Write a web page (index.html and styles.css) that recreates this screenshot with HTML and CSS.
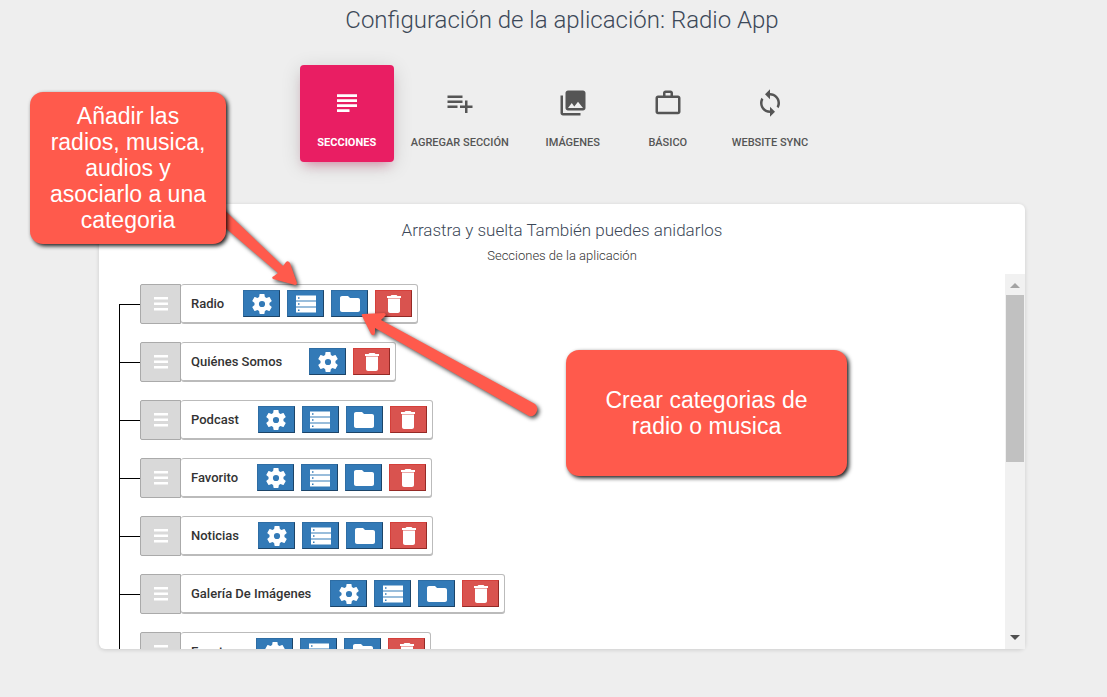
FILE: index.html
```html
<!DOCTYPE html>
<html lang="es">
<head>
<meta charset="utf-8">
<title>Configuración de la aplicación: Radio App</title>
<link rel="stylesheet" href="styles.css">
</head>
<body>
<svg class="sprite" aria-hidden="true">
  <symbol id="i-subject" viewBox="0 0 24 24"><path d="M14 17H4v2.200h10V17zm6-8H4v2.200h16V9zM4 15.200h16V13H4v2.200zM4 5v2.200h16V5H4z"/></symbol>
  <symbol id="i-add" viewBox="0 0 24 24"><path d="M14 10H2v2h12v-2zm0-4H2v2h12V6zm4 8v-4h-2v4h-4v2h4v4h2v-4h4v-2h-4zM2 16h8v-2H2v2z"/></symbol>
  <symbol id="i-photos" viewBox="0 0 24 24"><path d="M22 16V4c0-1.1-.9-2-2-2H8c-1.1 0-2 .9-2 2v12c0 1.1.9 2 2 2h12c1.1 0 2-.9 2-2zm-11-4l2.03 2.71L16 11l4 5H8l3-4zM2 6v14c0 1.1.9 2 2 2h14v-2H4V6H2z"/></symbol>
  <symbol id="i-work" viewBox="0 0 24 24"><path d="M14 6V4h-4v2h4zM4 8v11h16V8H4zm16-2c1.11 0 2 .89 2 2v11c0 1.11-.89 2-2 2H4c-1.11 0-2-.89-2-2l.01-11c0-1.11.88-2 1.99-2h4V4c0-1.11.89-2 2-2h4c1.11 0 2 .89 2 2v2h4z"/></symbol>
  <symbol id="i-sync" viewBox="0 0 24 24"><path d="M12 4V1L8 5l4 4V6c3.31 0 6 2.69 6 6 0 1.01-.25 1.97-.7 2.8l1.46 1.46C19.54 15.03 20 13.57 20 12c0-4.42-3.58-8-8-8zm0 14c-3.31 0-6-2.69-6-6 0-1.01.25-1.97.7-2.8L5.24 7.74C4.46 8.97 4 10.43 4 12c0 4.42 3.58 8 8 8v3l4-4-4-4v3z"/></symbol>
  <symbol id="i-gear" viewBox="0 0 24 24"><path d="M19.43 12.98c.04-.32.07-.64.07-.98s-.03-.66-.07-.98l2.11-1.65c.19-.15.24-.42.12-.64l-2-3.46c-.12-.22-.39-.3-.61-.22l-2.49 1c-.52-.4-1.08-.73-1.69-.98l-.38-2.65C14.46 2.18 14.25 2 14 2h-4c-.25 0-.46.18-.49.42l-.38 2.65c-.61.25-1.17.59-1.69.98l-2.49-1c-.23-.09-.49 0-.61.22l-2 3.46c-.13.22-.07.49.12.64l2.11 1.65c-.04.32-.07.65-.07.98s.03.66.07.98l-2.11 1.65c-.19.15-.24.42-.12.64l2 3.46c.12.22.39.3.61.22l2.49-1c.52.4 1.08.73 1.69.98l.38 2.65c.03.24.24.42.49.42h4c.25 0 .46-.18.49-.42l.38-2.65c.61-.25 1.17-.59 1.69-.98l2.49 1c.23.09.49 0 .61-.22l2-3.46c.12-.22.07-.49-.12-.64l-2.11-1.65zM12 15.1a3.1 3.1 0 1 1 0-6.2 3.1 3.1 0 0 1 0 6.200z"/></symbol>
  <symbol id="i-storage" viewBox="0 0 24 24"><path d="M2 20.500h20v-5H2v5zm2-3h1.500v1.500H4v-1.500zM2 3.500v5h20v-5H2zm3.500 3.200H4V5.200h1.500v1.500zM2 14.500h20v-5H2v5zm2-3.200h1.500v1.500H4v-1.500z"/></symbol>
  <symbol id="i-folder" viewBox="0 0 24 24"><path d="M10 4H4c-1.100 0-1.990.900-1.990 2L2 18c0 1.100.900 2 2 2h16c1.100 0 2-.900 2-2V8c0-1.100-.900-2-2-2h-8l-2-2z"/></symbol>
  <symbol id="i-trash" viewBox="0 0 24 24"><path d="M6 19c0 1.100.900 2 2 2h8c1.100 0 2-.900 2-2V6.600H6V19zM19 4h-3.500l-1-1h-5l-1 1H5v2h14V4z"/></symbol>
  <symbol id="i-grip" viewBox="0 0 16 16"><path d="M1 1h14v2.500H1zM1 6.500h14V9H1zM1 12h14v2.500H1z"/></symbol>
</svg>

<main class="page">
  <h1 class="title">Configuración de la aplicación: Radio App</h1>

  <nav class="tabs">
    <a class="tab tab-active" href="#secciones"><svg class="tab-icon"><use href="#i-subject"/></svg>Secciones</a>
    <a class="tab" href="#agregar"><svg class="tab-icon"><use href="#i-add"/></svg>Agregar sección</a>
    <a class="tab" href="#imagenes"><svg class="tab-icon"><use href="#i-photos"/></svg>Imágenes</a>
    <a class="tab" href="#basico"><svg class="tab-icon"><use href="#i-work"/></svg>Básico</a>
    <a class="tab" href="#sync"><svg class="tab-icon"><use href="#i-sync"/></svg>Website sync</a>
  </nav>

  <section class="panel" id="secciones">
    <header class="panel-head">
      <h2 class="panel-title">Arrastra y suelta También puedes anidarlos</h2>
      <p class="panel-sub">Secciones de la aplicación</p>
    </header>
    <div class="panel-body">
      <ul class="tree">
        <li class="node">
          <button class="grip" aria-label="Mover"><svg class="grip-icon"><use href="#i-grip"/></svg></button>
          <div class="card"><span class="name">Radio</span>
            <button class="act" aria-label="Configurar"><svg class="icon"><use href="#i-gear"/></svg></button>
            <button class="act" aria-label="Contenido"><svg class="icon"><use href="#i-storage"/></svg></button>
            <button class="act" aria-label="Categorías"><svg class="icon"><use href="#i-folder"/></svg></button>
            <button class="act act-del" aria-label="Eliminar"><svg class="icon"><use href="#i-trash"/></svg></button></div>
        </li>
        <li class="node">
          <button class="grip" aria-label="Mover"><svg class="grip-icon"><use href="#i-grip"/></svg></button>
          <div class="card card-short"><span class="name">Quiénes Somos</span>
            <button class="act" aria-label="Configurar"><svg class="icon"><use href="#i-gear"/></svg></button>
            <button class="act act-del" aria-label="Eliminar"><svg class="icon"><use href="#i-trash"/></svg></button></div>
        </li>
        <li class="node">
          <button class="grip" aria-label="Mover"><svg class="grip-icon"><use href="#i-grip"/></svg></button>
          <div class="card"><span class="name">Podcast</span>
            <button class="act" aria-label="Configurar"><svg class="icon"><use href="#i-gear"/></svg></button>
            <button class="act" aria-label="Contenido"><svg class="icon"><use href="#i-storage"/></svg></button>
            <button class="act" aria-label="Categorías"><svg class="icon"><use href="#i-folder"/></svg></button>
            <button class="act act-del" aria-label="Eliminar"><svg class="icon"><use href="#i-trash"/></svg></button></div>
        </li>
        <li class="node">
          <button class="grip" aria-label="Mover"><svg class="grip-icon"><use href="#i-grip"/></svg></button>
          <div class="card"><span class="name">Favorito</span>
            <button class="act" aria-label="Configurar"><svg class="icon"><use href="#i-gear"/></svg></button>
            <button class="act" aria-label="Contenido"><svg class="icon"><use href="#i-storage"/></svg></button>
            <button class="act" aria-label="Categorías"><svg class="icon"><use href="#i-folder"/></svg></button>
            <button class="act act-del" aria-label="Eliminar"><svg class="icon"><use href="#i-trash"/></svg></button></div>
        </li>
        <li class="node">
          <button class="grip" aria-label="Mover"><svg class="grip-icon"><use href="#i-grip"/></svg></button>
          <div class="card"><span class="name">Noticias</span>
            <button class="act" aria-label="Configurar"><svg class="icon"><use href="#i-gear"/></svg></button>
            <button class="act" aria-label="Contenido"><svg class="icon"><use href="#i-storage"/></svg></button>
            <button class="act" aria-label="Categorías"><svg class="icon"><use href="#i-folder"/></svg></button>
            <button class="act act-del" aria-label="Eliminar"><svg class="icon"><use href="#i-trash"/></svg></button></div>
        </li>
        <li class="node">
          <button class="grip" aria-label="Mover"><svg class="grip-icon"><use href="#i-grip"/></svg></button>
          <div class="card"><span class="name">Galería De Imágenes</span>
            <button class="act" aria-label="Configurar"><svg class="icon"><use href="#i-gear"/></svg></button>
            <button class="act" aria-label="Contenido"><svg class="icon"><use href="#i-storage"/></svg></button>
            <button class="act" aria-label="Categorías"><svg class="icon"><use href="#i-folder"/></svg></button>
            <button class="act act-del" aria-label="Eliminar"><svg class="icon"><use href="#i-trash"/></svg></button></div>
        </li>
        <li class="node">
          <button class="grip" aria-label="Mover"><svg class="grip-icon"><use href="#i-grip"/></svg></button>
          <div class="card"><span class="name">Eventos</span>
            <button class="act" aria-label="Configurar"><svg class="icon"><use href="#i-gear"/></svg></button>
            <button class="act" aria-label="Contenido"><svg class="icon"><use href="#i-storage"/></svg></button>
            <button class="act" aria-label="Categorías"><svg class="icon"><use href="#i-folder"/></svg></button>
            <button class="act act-del" aria-label="Eliminar"><svg class="icon"><use href="#i-trash"/></svg></button></div>
        </li>
      </ul>
      <div class="scroll" aria-hidden="true">
        <svg class="scroll-arrow scroll-up" viewBox="0 0 10 5"><path d="M5 0l5 5H0z"/></svg>
        <div class="scroll-track"><div class="scroll-thumb"></div></div>
        <svg class="scroll-arrow" viewBox="0 0 10 5"><path d="M0 0h10L5 5z"/></svg>
      </div>
    </div>
  </section>
</main>

<svg class="arrows" viewBox="0 0 560 430" aria-hidden="true">
  <path d="M215 201L283 266L286 262Q288 260 290 263L297 283Q297 285 295 285L273 279Q271 277 274 276L278 273L215 219z"/>
  <path d="M363 314L384 313Q387 314 385 316L381 320L535 404A7 7 0 0 1 529 416L375 328L375 333Q374 337 371 334L362 316Q361 314 363 314z"/>
</svg>
<aside class="callout callout-add">Añadir las radios, musica, audios y asociarlo a una categoria</aside>
<aside class="callout callout-cat">Crear categorias de radio o musica</aside>
</body>
</html>
```

FILE: styles.css
```css
* { box-sizing: border-box; }
body {
  margin: 0;
  min-height: 100vh;
  overflow: hidden;
  background: #eee;
  color: #333;
  font-family: Roboto, sans-serif;
}
.sprite { display: none; }
button { font: inherit; cursor: pointer; }

.page {
  display: flex;
  flex-direction: column;
  height: 100vh;
  padding: 4px 82px 48px 99px;
}
.title {
  margin: 0;
  font-size: 24px;
  line-height: 32px;
  font-weight: 300;
  color: #3c4858;
  text-align: center;
}

.tabs {
  display: flex;
  justify-content: center;
  gap: 1px;
  margin: 29px 0 42px;
}
.tab {
  display: flex;
  flex-direction: column;
  align-items: center;
  min-width: 94px;
  padding: 23px 16px 7px;
  border-radius: 4px;
  color: #555;
  font-size: 11px;
  line-height: 24px;
  font-weight: 500;
  text-transform: uppercase;
  text-decoration: none;
}
.tab-icon {
  width: 30px;
  height: 30px;
  margin-bottom: 13px;
  fill: currentColor;
}
.tab-active {
  background: #e91e63;
  color: #fff;
  font-weight: 700;
  box-shadow: 0 4px 20px rgba(0, 0, 0, .14), 0 7px 10px -5px rgba(233, 30, 99, .4);
}

.panel {
  display: flex;
  flex: 1;
  flex-direction: column;
  min-height: 0;
  border-radius: 6px;
  background: #fff;
  box-shadow: 0 1px 4px rgba(0, 0, 0, .14);
}
.panel-head { padding: 14px 0 8px; text-align: center; }
.panel-title {
  margin: 0;
  font-size: 17px;
  line-height: 24px;
  font-weight: 300;
  color: #3c4858;
}
.panel-sub {
  margin: 0;
  padding-top: 4px;
  font-size: 13px;
  line-height: 20px;
  font-weight: 300;
}
.panel-body {
  display: flex;
  flex: 1;
  min-height: 0;
}

.tree {
  flex: 1;
  margin: 0;
  padding: 10px 0 0 20px;
  overflow: hidden;
  border-bottom-left-radius: 6px;
  list-style: none;
}
.node {
  display: flex;
  height: 58px;
  align-items: flex-start;
}
.node::before {
  content: "";
  width: 21px;
  height: 58px;
  background: linear-gradient(#000, #000) 0 0 / 1px 100% no-repeat, linear-gradient(#000, #000) 0 20px / 100% 1px no-repeat;
}
.node:first-child::before {
  height: 38px;
  margin-top: 20px;
  background-position: 0 0, 0 0;
}
.grip {
  display: flex;
  align-items: center;
  justify-content: center;
  width: 41px;
  height: 40px;
  padding: 0;
  border: 1px solid #aaa;
  border-radius: 2px 0 0 2px;
  background: #d9d9d9;
}
.grip-icon { width: 16px; height: 16px; fill: #fff; }
.card {
  display: flex;
  align-items: center;
  gap: 7px;
  height: 39px;
  padding: 0 5px 0 10px;
  border: 1px solid #bbb;
  border-left: 0;
  border-radius: 3px;
  background: #fff;
  box-shadow: 0 1px 0 #bbb;
}
.name {
  padding-right: 12px;
  font-size: 13px;
  line-height: 20px;
  font-weight: 500;
}
.card-short .name { padding-right: 20px; }
.act {
  display: flex;
  align-items: center;
  justify-content: center;
  width: 37px;
  height: 27px;
  padding: 0;
  border: 1px solid #2e6da4;
  border-right-color: #1c4468;
  border-bottom-color: #1c4468;
  background: #337ab7;
}
.act-del {
  border-color: #d43f3a #942a26 #942a26 #d43f3a;
  background: #d9534f;
}
.icon { width: 24px; height: 24px; fill: #fff; flex: none; }

.scroll {
  display: flex;
  flex-direction: column;
  align-items: center;
  width: 20px;
  padding: 9px 1px;
  background: #f1f1f1;
}
.scroll-arrow { width: 10px; height: 5px; fill: #505050; }
.scroll-up { fill: #a3a3a3; }
.scroll-track { flex: 1; align-self: stretch; padding: 7px 0; }
.scroll-thumb { height: 50%; background: #c1c1c1; }

.arrows {
  position: absolute;
  left: 0;
  top: 0;
  width: 560px;
  height: 430px;
  fill: #ff5a4c;
  pointer-events: none;
  filter: drop-shadow(2px 2px 2px rgba(0, 0, 0, .75));
}
.callout {
  position: absolute;
  display: flex;
  align-items: center;
  justify-content: center;
  border-radius: 13px;
  background: #ff5a4c;
  color: #fff;
  font-family: "Liberation Sans", Arial, sans-serif;
  font-size: 23px;
  line-height: 26px;
  text-align: center;
  box-shadow: 2px 2px 4px rgba(0, 0, 0, .9);
}
.callout-add { left: 30px; top: 92px; width: 196px; height: 152px; padding: 0 16px; }
.callout-cat { left: 566px; top: 350px; width: 281px; height: 126px; padding: 0 36px; }
```
